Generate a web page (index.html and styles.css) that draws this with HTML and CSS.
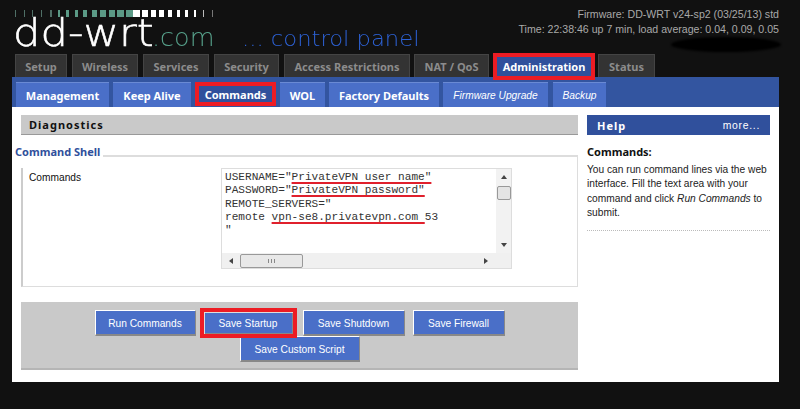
FILE: index.html
```html
<!DOCTYPE html>
<html lang="en">
<head>
<meta charset="utf-8">
<title>DD-WRT Control Panel</title>
<link rel="stylesheet" href="styles.css">
</head>
<body>
<div class="page">
  <header class="header">
    <div class="brand">
      <svg class="ticks" width="200" height="8" viewBox="0 0 200 8">
        <g fill="#4f6f66">
          <rect x="0" width="1" height="7"/><rect x="9" width="1" height="7"/><rect x="17" width="1" height="7"/><rect x="26" width="1" height="7"/><rect x="35" width="2" height="7"/>
        </g>
        <g fill="#5b9a86">
          <rect x="43" width="2" height="7"/><rect x="51" width="3" height="7"/><rect x="60" width="3" height="7"/><rect x="68" width="4" height="7"/><rect x="77" width="5" height="7"/><rect x="85" width="6" height="7"/><rect x="94" width="6" height="7"/><rect x="102" width="7" height="7"/><rect x="111" width="7" height="7"/>
        </g>
        <g fill="#fff">
          <rect x="118" width="7" height="7"/><rect x="127" width="6" height="7"/><rect x="136" width="5" height="7"/><rect x="144" width="5" height="7"/><rect x="153" width="4" height="7"/><rect x="162" width="3" height="7"/><rect x="170" width="3" height="7"/><rect x="179" width="2" height="7"/>
        </g>
        <rect x="188" width="1" height="7" fill="#bbb"/>
        <rect x="197" width="1" height="7" fill="#777"/>
      </svg>
      <div class="logo-row">
        <span class="logo-main">dd-wrt</span><span class="logo-com">.com</span><span class="logo-panel">... control panel</span>
      </div>
    </div>
    <div class="status-info">
      <div>Firmware: DD-WRT v24-sp2 (03/25/13) std</div>
      <div>Time: 22:38:46 up 7 min, load average: 0.04, 0.09, 0.05</div>
      <div class="scribble"></div>
    </div>
  </header>

  <nav class="tabs">
    <a class="tab t-setup">Setup</a>
    <a class="tab t-wireless">Wireless</a>
    <a class="tab t-services">Services</a>
    <a class="tab t-security">Security</a>
    <a class="tab t-access">Access Restrictions</a>
    <a class="tab t-nat">NAT / QoS</a>
    <a class="tab tab-active">Administration</a>
    <a class="tab t-status">Status</a>
  </nav>

  <nav class="subtabs">
    <a class="subtab s-mgmt">Management</a>
    <a class="subtab s-keep">Keep Alive</a>
    <a class="subtab subtab-active">Commands</a>
    <a class="subtab s-wol">WOL</a>
    <a class="subtab s-factory">Factory Defaults</a>
    <a class="subtab subtab-em s-fw">Firmware Upgrade</a>
    <a class="subtab subtab-em s-backup">Backup</a>
  </nav>

  <main class="content">
    <section class="main-col">
      <h2 class="section-title">Diagnostics</h2>
      <fieldset class="shell">
        <legend class="shell-legend">Command Shell</legend>
        <div class="shell-row">
          <label class="shell-label">Commands</label>
          <div class="fake-textarea">
            <pre class="code">USERNAME="<span class="mark">PrivateVPN user name"</span>
PASSWORD="<span class="mark">PrivateVPN password"</span>
REMOTE_SERVERS="
remote <span class="mark">vpn-se8.privatevpn.com </span>53
"</pre>
            <div class="vbar">
              <span class="arrow arrow-up"></span>
              <span class="vthumb"></span>
              <span class="vtrack"></span>
              <span class="arrow arrow-down"></span>
            </div>
            <div class="hbar">
              <span class="arrow arrow-left"></span>
              <span class="hthumb"><i class="grip"></i></span>
              <span class="htrack"></span>
              <span class="arrow arrow-right"></span>
            </div>
            <div class="corner"></div>
          </div>
        </div>
      </fieldset>
      <div class="actions">
        <div class="action-row">
          <button class="btn b-run">Run Commands</button>
          <button class="btn btn-marked">Save Startup</button>
          <button class="btn b-shut">Save Shutdown</button>
          <button class="btn b-fire">Save Firewall</button>
        </div>
        <div class="action-row">
          <button class="btn b-custom">Save Custom Script</button>
        </div>
      </div>
    </section>
    <aside class="help">
      <div class="help-head"><span class="help-title">Help</span><span class="help-more">more...</span></div>
      <h3 class="help-term">Commands:</h3>
      <p class="help-text">You can run command lines via the web interface. Fill the text area with your command and click <em>Run Commands</em> to submit.</p>
    </aside>
  </main>
</div>
</body>
</html>
```
FILE: styles.css
```css
* { box-sizing: border-box; }
html, body { margin: 0; height: 100%; }
body {
  background: #111;
  font-family: "Liberation Sans", Arial, sans-serif;
  font-size: 10.2px;
  overflow: hidden;
}
.page { width: 767px; margin-left: 12px; }

/* header */
.header { height: 54px; display: flex; justify-content: space-between; }
.brand { padding: 10px 0 0 3px; }
.ticks { display: block; }
.logo-row { display: flex; align-items: baseline; height: 36px; white-space: nowrap; margin-top: -2px; margin-left: -2px; }
.logo-main, .logo-com, .logo-panel {
  font-family: "DejaVu Sans", sans-serif; font-weight: 200; display: inline-block; flex: none;
  transform-origin: left bottom;
}
.logo-main {
  font-size: 37px; color: #fff; line-height: 36px; width: 139px;
  transform: scaleX(1.17); -webkit-text-stroke: 0.5px #fff;
}
.logo-com { font-size: 24px; color: #56a08a; width: 90px; transform: scaleX(1.06); }
.logo-panel { font-size: 22px; color: #2d62d6; transform: scaleX(1.03); }
.status-info { color: #a9a9a9; text-align: right; line-height: 15px; padding-top: 7px; font-size: 10.6px; position: relative; }
.scribble {
  position: absolute; right: -2px; top: 37px; width: 110px; height: 15px;
  background: #000; border-radius: 50%; filter: blur(1px);
}

/* tabs */
.tabs { height: 23px; display: flex; padding-left: 3px; }
.tab {
  font-family: "Noto Sans", sans-serif;
  background: #333; color: #8c8c8c; font-weight: 700; font-size: 11px;
  display: flex; align-items: center; justify-content: center;
  border-top: 1px solid #444; border-left: 1px solid #444; border-right: 1px solid #444;
}
.t-setup { width: 52px; margin-right: 5px; }
.t-wireless { width: 66px; margin-right: 5px; }
.t-services { width: 66px; margin-right: 5px; }
.t-security { width: 65px; margin-right: 5px; }
.t-access { width: 126px; margin-right: 4px; }
.t-nat { width: 75px; margin-right: 4px; }
.tab-active {
  width: 102px; margin-right: 3px; background: #30509c; color: #fff;
  border: 4px solid #ed1c24; height: 27px; margin-top: -1px;
  position: relative; z-index: 1;
}
.t-status { width: 57px; }

/* sub tabs */
.subtabs { height: 30px; background: #3355a0; display: flex; align-items: flex-end; padding: 0 0 0 4px; }
.subtab {
  font-family: "Noto Sans", sans-serif;
  height: 25px; background: #4a6fc8; color: #fff; font-weight: 700; font-size: 11px;
  display: flex; align-items: center; justify-content: center;
  border-top: 1px solid #6a8ad4; margin-right: 4px;
}
.s-mgmt { width: 93px; }
.s-keep { width: 78px; }
.subtab-active {
  width: 81px; height: 24px; background: #30509c; border: 4px solid #ed1c24; margin-bottom: 1px;
}
.s-wol { width: 45px; }
.s-factory { width: 110px; }
.s-fw { width: 105px; margin-right: 5px; }
.s-backup { width: 53px; }
.subtab-em { font-family: "Liberation Sans", sans-serif; font-weight: 400; font-style: italic; font-size: 10.2px; }

/* content */
.content { height: 275px; background: #fff; display: flex; padding: 8px 9px 0 9px; }
.main-col { width: 557px; margin-right: 9px; flex: none; }
.section-title {
  font-family: "Noto Sans", sans-serif;
  margin: 0; height: 20px; background: #c9c9c9; border-bottom: 1px solid #999;
  font-size: 11px; font-weight: 700; color: #111; line-height: 19px; padding-left: 8px; letter-spacing: 1px;
}
.shell {
  margin: 9px 0 0; padding: 0 8px 0 6px; height: 143px; min-width: 0;
  border: 1px solid #ddd; border-left: 2px solid #ccc; border-top: 2px solid #ddd;
}
.shell-legend {
  font-family: "Noto Sans", sans-serif;
  color: #30509c; font-weight: 700; font-size: 11px; padding: 0 3px 8px 0;
  margin-left: -14px; line-height: 16px;
}
.shell-row { display: flex; }
.shell-label { width: 192px; padding-top: 2px; color: #111; font-size: 10.2px; line-height: 15px; }

.fake-textarea {
  width: 291px; height: 101px; border: 1px solid #ddd;
  display: grid; grid-template-columns: 1fr 15px; grid-template-rows: 1fr 15px;
}
.code {
  margin: 0; padding: 2px 0 0 3px;
  font-family: "Liberation Mono", monospace; font-size: 11.1px; line-height: 13.3px; color: #333;
  overflow: hidden;
}
.mark { text-decoration: underline; text-decoration-color: #e0202c; text-decoration-thickness: 2px; text-underline-offset: 2px; text-decoration-skip-ink: none; white-space: pre; }
.vbar { background: #f2f2f2; display: flex; flex-direction: column; align-items: center; }
.hbar { background: #f0f0f0; display: flex; align-items: center; }
.corner { background: #f0f0f0; }
.vthumb { width: 14px; height: 14px; background: #e4e4e4; border: 1px solid #999; border-radius: 2px; margin-top: 7px; flex: none; }
.vtrack, .htrack { flex: 1; }
.hthumb { width: 63px; height: 14px; background: #e8e8e8; border: 1px solid #999; border-radius: 2px; display: flex; align-items: center; justify-content: center; }
.grip { width: 7px; height: 4px; border-left: 1px solid #888; border-right: 1px solid #888; background: linear-gradient(90deg, transparent 2px, #888 2px, #888 3px, transparent 3px); }
.arrow { width: 0; height: 0; flex: none; border: 3px solid transparent; }
.arrow-up { border-bottom: 4px solid #444; border-top: 0; margin-top: 6px; }
.arrow-down { border-top: 4px solid #444; border-bottom: 0; margin-bottom: 6px; }
.arrow-left { border-right: 4px solid #444; border-left: 0; margin-left: 7px; margin-right: 7px; }
.arrow-right { border-left: 4px solid #444; border-right: 0; margin-right: 8px; }

/* buttons */
.actions {
  margin-top: 15px; height: 68px; background: #c9c9c9; border-bottom: 2px solid #b5b5b5;
  padding-top: 8px;
}
.action-row { display: flex; justify-content: center; align-items: flex-start; height: 26px; }
.btn {
  height: 26px; margin: 0; padding: 1px 0 0; background: #4a6fc8; color: #fff;
  font-family: inherit; font-size: 10.2px; font-weight: 400;
  border: 1px solid #fff; border-right-color: #888; border-bottom: 2px solid #888;
}
.b-run { width: 101px; margin-right: 4px; }
.btn-marked {
  width: 97px; height: 30px; margin: -2px 6px 0 0; flex: none; padding: 0;
  border: 4px solid #ed1c24; position: relative; z-index: 1;
  box-shadow: inset 1px 1px #ddd, inset -1px -1px #888;
}
.b-shut { width: 102px; margin-right: 8px; }
.b-fire { width: 92px; }
.b-custom { width: 120px; }

/* help */
.help { width: 183px; flex: none; }
.help-head { height: 20px; background: #30509c; color: #fff; display: flex; justify-content: space-between; align-items: center; padding: 0 10px; }
.help-title { font-family: "Noto Sans", sans-serif; font-weight: 700; font-size: 11px; letter-spacing: 1px; }
.help-more { font-size: 10.4px; letter-spacing: 0.7px; }
.help-term { font-family: "Noto Sans", sans-serif; margin: 9px 0 0; font-size: 11px; font-weight: 700; line-height: 16px; color: #111; }
.help-text { margin: 3px 0 0; padding-bottom: 9px; font-size: 10.2px; line-height: 14.4px; color: #222; border-bottom: 1px dotted #bbb; }
```
